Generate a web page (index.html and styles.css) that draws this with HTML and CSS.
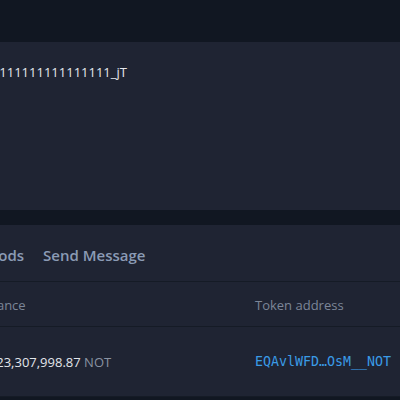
FILE: index.html
```html
<!DOCTYPE html>
<html lang="en">

<head>
    <meta charset="UTF-8">
    <meta name="viewport" content="width=device-width, initial-scale=1.0">
    <title>Jetton</title>
    <link rel="stylesheet" href="styles.css">
</head>

<body>
    <div id="page">
        <div class="card info">
            <div class="info-name">111111111111111111_jT</div>
        </div>
        <div class="card main">
            <ul class="tabs">
                <li>Get Methods</li>
                <li>Send Message</li>
            </ul>
            <div class="row head">
                <div>Balance</div>
                <div>Token address</div>
            </div>
            <div class="row">
                <div class="balance">1,123,307,998.87 <span class="sym">NOT</span></div>
                <div class="addr">EQAvlWFD…OsM__NOT</div>
            </div>
        </div>
    </div>
</body>

</html>
```

FILE: styles.css
```css
* {
    margin: 0;
    padding: 0;
    box-sizing: border-box;
}

body {
    background: #111722;
    font-family: "Open Sans", "Noto Sans", sans-serif;
    font-size: 13px;
    color: #dfe3e8;
    overflow: hidden;
}

#page {
    width: 560px;
    margin-left: -80px;
    padding-top: 42px;
    display: flex;
    flex-direction: column;
    gap: 15px;
}

.card {
    background: #1f2433;
}

.info {
    height: 168px;
    padding: 21px 57px;
}

.info-name {
    font-size: 13px;
    color: #e4e7ec;
}

.tabs {
    list-style: none;
    display: flex;
    gap: 19px;
    height: 57px;
    align-items: center;
    padding: 4px 0 0 11px;
    border-bottom: 1px solid #151b26;
}

.tabs>li {
    font-size: 15px;
    font-weight: 600;
    color: #8b9bb5;
    cursor: pointer;
}

.row {
    display: grid;
    grid-template-columns: 277px 1fr;
    align-items: center;
    padding-left: 58px;
    height: 70px;
    border-bottom: 1px solid #151b26;
}

.row.head {
    height: 45px;
    padding-top: 1px;
    font-size: 13px;
    color: #7c8698;
}

.balance {
    color: #e2e6eb;
}

.sym {
    color: #8a93a2;
}

.addr {
    font-family: "DejaVu Sans Mono", monospace;
    font-size: 13.3px;
    color: #3a9be6;
}
```
